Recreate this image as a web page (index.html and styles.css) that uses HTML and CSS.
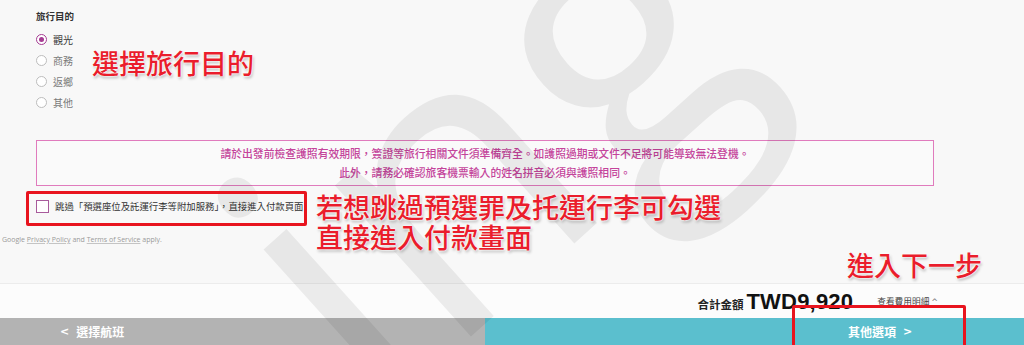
FILE: index.html
```html
<!DOCTYPE html>
<html lang="zh-Hant">
<head>
<meta charset="utf-8">
<title>旅行目的</title>
<link rel="stylesheet" href="styles.css">
</head>
<body>
<div class="page">
  <main class="main">
    <section class="purpose">
      <div class="purpose-title">旅行目的</div>
      <ul class="radios">
        <li class="radio-row"><span class="radio checked"></span><span class="radio-label on">觀光</span></li>
        <li class="radio-row"><span class="radio"></span><span class="radio-label">商務</span></li>
        <li class="radio-row"><span class="radio"></span><span class="radio-label">返鄉</span></li>
        <li class="radio-row"><span class="radio"></span><span class="radio-label">其他</span></li>
      </ul>
    </section>

    <div class="notice">
      <p>請於出發前檢查護照有效期限，簽證等旅行相關文件須準備齊全。如護照過期或文件不足將可能導致無法登機。</p>
      <p>此外，請務必確認旅客機票輸入的姓名拼音必須與護照相同。</p>
    </div>

    <label class="skip-row">
      <span class="checkbox"></span>
      <span class="skip-label">跳過「預選座位及託運行李等附加服務」，直接進入付款頁面</span>
    </label>

    <div class="recaptcha">Google <u>Privacy Policy</u> and <u>Terms of Service</u> apply.</div>
  </main>

  <div class="total-bar">
    <span class="total-label">合計金額</span>
    <span class="total-amount">TWD9,920</span>
    <span class="total-detail">查看費用明細 <span class="caret">^</span></span>
  </div>

  <nav class="nav">
    <div class="nav-back"><span class="chev">&lt;</span>選擇航班</div>
    <div class="nav-next">其他選項<span class="chev right">&gt;</span></div>
  </nav>

  <div class="watermark" aria-hidden="true">ing</div>
  <div class="note note-purpose">選擇旅行目的</div>
  <div class="note note-skip"><div>若想跳過預選罪及托運行李可勾選</div><div>直接進入付款畫面</div></div>
  <div class="note note-next">進入下一步</div>
  <div class="mark mark-skip"></div>
  <div class="mark mark-next"></div>
</div>
</body>
</html>
```

FILE: styles.css
```css
* { box-sizing: border-box; }
html, body { margin: 0; padding: 0; }
body {
  width: 1024px;
  height: 345px;
  overflow: hidden;
  font-family: "Noto Sans CJK TC", "Noto Sans", sans-serif;
  background: #f8f8f8;
}
.page {
  position: relative;
  width: 1024px;
  height: 345px;
  display: flex;
  flex-direction: column;
  overflow: hidden;
}
.main {
  flex: 1;
  padding: 8px 0 0 36px;
  display: flex;
  flex-direction: column;
}
.purpose-title {
  font-size: 9.5px;
  font-weight: 700;
  color: #333;
  line-height: 16px;
}
.radios {
  list-style: none;
  margin: 5px 0 0;
  padding: 0;
}
.radio-row {
  height: 21px;
  display: flex;
  align-items: center;
  gap: 6px;
}
.radio {
  width: 11px;
  height: 11px;
  border-radius: 50%;
  border: 1px solid #bdbdbd;
  background: #fff;
  position: relative;
}
.radio.checked { border-color: #a53b92; }
.radio.checked::after {
  content: "";
  position: absolute;
  left: 2px; top: 2px;
  width: 5px; height: 5px;
  border-radius: 50%;
  background: #a53b92;
}
.radio-label { font-size: 10px; color: #7a7a7a; line-height: 14px; }
.radio-label.on { color: #3a3a3a; }

.notice {
  margin-top: 27px;
  width: 898px;
  border: 1px solid #e07bbd;
  padding: 3px 0;
  text-align: center;
  color: #c4449b;
  font-size: 10.8px;
  font-weight: 500;
  line-height: 19px;
  background: #fafafa;
}
.notice p { margin: 0; }

.skip-row {
  margin-top: 11px;
  display: flex;
  align-items: center;
  gap: 6px;
  height: 18px;
}
.checkbox {
  width: 13px;
  height: 13px;
  border: 1px solid #a85b9c;
  background: #fff;
}
.skip-label { font-size: 9.4px; color: #333; line-height: 14px; }

.recaptcha {
  margin: 20px 0 0 -34px;
  font-family: "Open Sans", sans-serif;
  font-size: 7px;
  line-height: 10px;
  color: #9a9a9a;
}
.recaptcha u { text-decoration-color: #c4c4c4; }

.total-bar {
  height: 35px;
  background: #fcfcfc;
  border-top: 1px solid #ececec;
  display: flex;
  align-items: center;
  justify-content: flex-end;
  padding: 2px 86px 0 0;
}
.total-label {
  font-size: 11.5px;
  font-weight: 700;
  color: #222;
  margin-top: 4px;
}
.total-amount {
  font-family: "Liberation Sans", Arial, sans-serif;
  font-size: 22px;
  font-weight: 700;
  color: #111;
  margin-left: 3px;
  letter-spacing: 0.2px;
}
.total-detail {
  font-size: 8.7px;
  color: #444;
  margin-left: 24px;
  margin-top: -1px;
}
.caret { font-family: "DejaVu Sans", sans-serif; font-size: 8px; color: #777; }

.nav {
  height: 27px;
  display: flex;
  color: #fff;
  font-size: 12px;
  font-weight: 700;
}
.nav-back {
  width: 485px;
  background: #b3b3b3;
  display: flex;
  align-items: center;
  padding-left: 60px;
}
.nav-next {
  flex: 1;
  background: #5bbfce;
  display: flex;
  align-items: center;
  padding-left: 363px;
}
.chev {
  font-family: "DejaVu Sans", sans-serif;
  font-weight: 700;
  font-size: 11px;
  margin-right: 7px;
}
.chev.right { margin: 0 0 0 7px; }

.watermark {
  position: absolute;
  left: 150px;
  top: 172px;
  font-family: "Open Sans", sans-serif;
  font-size: 380px;
  line-height: 1;
  color: rgba(0,0,0,0.065);
  transform: rotate(-42deg);
  transform-origin: left top;
  pointer-events: none;
  white-space: nowrap;
}

.note {
  position: absolute;
  color: #ea1d2c;
  font-size: 27px;
  font-weight: 500;
  line-height: 30px;
  white-space: nowrap;
  text-shadow: 0 0 1px #fff, 0 0 2px #fff, 0 0 3px #fff, 1px 2px 3px rgba(0,0,0,0.3);
}
.note-purpose { left: 92px; top: 48px; }
.note-skip { left: 316px; top: 192px; }
.note-next { left: 847px; top: 250px; }

.mark {
  position: absolute;
  border: 3px solid #e8141e;
  border-radius: 2px;
}
.mark-skip { left: 26px; top: 191px; width: 281px; height: 35px; }
.mark-next { left: 792px; top: 305px; width: 174px; height: 44px; }
```
